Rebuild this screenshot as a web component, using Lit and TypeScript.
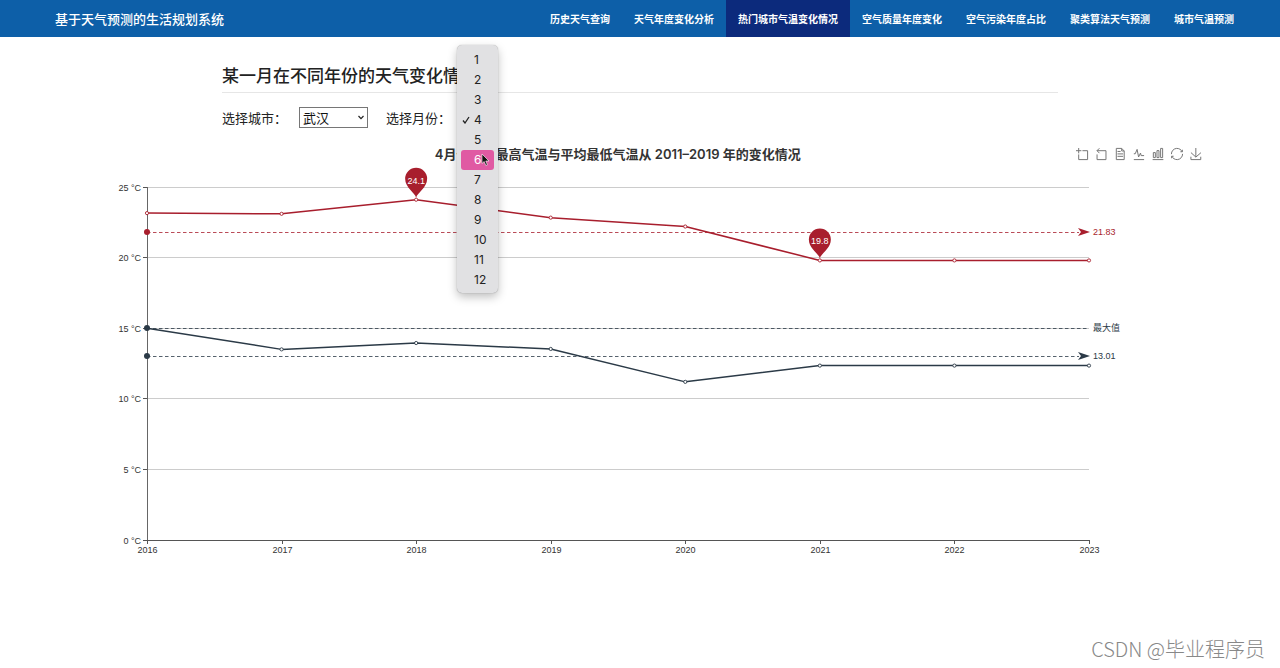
import { LitElement, css, html, svg } from "lit";
import { customElement, property, state } from "lit/decorators.js";
import { classMap } from "lit/directives/class-map.js";

const NAV = [
  "历史天气查询",
  "天气年度变化分析",
  "热门城市气温变化情况",
  "空气质量年度变化",
  "空气污染年度占比",
  "聚类算法天气预测",
  "城市气温预测",
];
const ACTIVE_NAV = 2;

const TOOLS = [
  { name: "区域缩放", d: "M0,13.5h26.9 M13.5,26.9V0 M32.1,13.5H58V58H13.5 V32.1" },
  { name: "区域缩放还原", d: "M22,1.4L9.9,13.5l12.3,12.3 M10.3,13.5H54.9v44.6 H10.3v-26" },
  { name: "数据视图", d: "M17.5,17.3H33 M45.4,29.5h-28 M11.5,2v56H51V14.8L38.4,2H11.5z M38.4,2.2v12.7H51 M45.4,41.7h-28" },
  { name: "切换为折线图", d: "M4.1,28.9h7.1l9.3-22l7.4,38l9.7-19.7l3,12.8h14.9M4.1,58h51.4" },
  { name: "切换为柱状图", d: "M6.7,22.9h10V48h-10V22.9zM24.9,13h10v35h-10V13zM43.2,2h10v46h-10V2zM3.1,58h53.7" },
  { name: "还原", d: "M47,18.9h9.8V8.7 M56.3,20.1 C52.1,9,40.5,0.6,26.8,2.1C12.6,3.7,1.6,16.2,2.1,30.6 M13,41.1H3.1v10.2 M3.7,39.9c4.2,11.1,15.8,19.5,29.5,18 c14.2-1.6,25.2-14.1,24.7-28.5" },
  { name: "保存为图片", d: "M4.7,22.9L29.3,45.5L54.7,23.4M4.6,43.6L4.6,58L53.8,58L53.8,43.6M29.2,45.1L29.2,0" },
];

const YEARS = [2016, 2017, 2018, 2019, 2020, 2021, 2022, 2023];
const HIGH = [23.15, 23.1, 24.1, 22.83, 22.2, 19.8, 19.8, 19.8];
const LOW = [15, 13.5, 13.95, 13.53, 11.2, 12.35, 12.35, 12.35];
const RED = "#a81e2d";
const NAVY = "#2b3a47";

@customElement("temperature-chart")
export class TemperatureChart extends LitElement {
  @state() private width = 1178;
  private observer?: ResizeObserver;

  static styles = css`
    :host {
      display: block;
      font-family: Inter, "Noto Sans CJK SC", sans-serif;
    }
    .head {
      display: grid;
      grid-template-columns: 1fr auto 1fr;
      align-items: center;
      height: 20px;
      padding: 0 5px;
    }
    h3 {
      grid-column: 2;
      margin: 0;
      color: #333;
      font-size: 13px;
      font-weight: 600;
      line-height: 20px;
      white-space: nowrap;
    }
    .tools {
      display: flex;
      justify-content: flex-end;
      gap: 7px;
    }
    .tools button {
      width: 12px;
      height: 12px;
      padding: 0;
      border: 0;
      background: none;
      cursor: pointer;
    }
    .tools svg {
      display: block;
      fill: none;
      stroke: #777;
      overflow: visible;
    }
    .tools path {
      vector-effect: non-scaling-stroke;
    }
    .plot {
      display: block;
      width: 100%;
      height: 400px;
      font-family: "Liberation Sans", "Noto Sans CJK SC", sans-serif;
      font-size: 9px;
    }
    .tick {
      fill: #333;
    }
    .pin {
      fill: #fff;
    }
  `;

  firstUpdated() {
    const measure = () => {
      const w = Math.round(this.getBoundingClientRect().width);
      if (w > 0) this.width = w;
    };
    measure();
    this.observer = new ResizeObserver(measure);
    this.observer.observe(this);
  }

  disconnectedCallback() {
    this.observer?.disconnect();
    super.disconnectedCallback();
  }

  private get left() {
    return Math.round(this.width * 0.1);
  }
  private get right() {
    return Math.round(this.width * 0.9);
  }
  private x(i: number) {
    return this.left + ((this.right - this.left) * i) / (YEARS.length - 1);
  }
  private y(v: number) {
    return 376 - v * 14.12;
  }

  private series(values: number[], color: string) {
    const points = values.map((v, i) => `${this.x(i)},${this.y(v)}`).join(" ");
    return svg`
      <polyline points=${points} fill="none" stroke=${color} stroke-width="1.5" stroke-linejoin="round" />
      ${values.map((v, i) => svg`<circle cx=${this.x(i)} cy=${this.y(v)} r="1.6" fill="#fff" stroke=${color} stroke-width="0.9" />`)}
    `;
  }

  private markLine(v: number, color: string, label: string, arrow: boolean) {
    const y = Math.round(this.y(v));
    const r = this.right;
    return svg`
      <line x1=${this.left} x2=${arrow ? r - 10 : r} y1=${y + 0.5} y2=${y + 0.5} stroke=${color} stroke-width="0.8" stroke-dasharray="3.5 2.5" />
      <circle cx=${this.left} cy=${y} r="3" fill=${color} />
      ${arrow ? svg`<path d=${`M${r + 1},${y}l-12,-4l3,4l-3,4z`} fill=${color} />` : ""}
      <text x=${r + 4} y=${y + 3} fill=${color}>${label}</text>
    `;
  }

  private pin(i: number) {
    const x = this.x(i);
    const y = this.y(HIGH[i]);
    return svg`
      <path d=${`M${x},${y - 2}C${x - 1},${y - 7} ${x - 11},${y - 12} ${x - 11},${y - 21}A11,11 0 1 1 ${x + 11},${y - 21}C${x + 11},${y - 12} ${x + 1},${y - 7} ${x},${y - 2}z`} fill=${RED} />
      <text class="pin" x=${x} y=${y - 16} text-anchor="middle">${HIGH[i]}</text>
    `;
  }

  render() {
    const l = this.left;
    const r = this.right;
    return html`
      <div class="head">
        <h3>4月份平均最高气温与平均最低气温从 2011–2019 年的变化情况</h3>
        <div class="tools">
          ${TOOLS.map(
            (t) => html`<button type="button" aria-label=${t.name}>
              <svg width="12" height="12" viewBox="0 0 60 60"><path d=${t.d} /></svg>
            </button>`,
          )}
        </div>
      </div>
      <svg class="plot" role="img" aria-label="平均最高气温与平均最低气温">
        ${[0, 5, 10, 15, 20, 25].map((v) => {
          const y = Math.floor(this.y(v)) + 0.5;
          return svg`
            ${v ? svg`<line x1=${l} x2=${r} y1=${y} y2=${y} stroke="#ccc" />` : ""}
            <line x1=${l - 4} x2=${l} y1=${y} y2=${y} stroke="#555" />
            <text class="tick" x=${l - 6} y=${y + 3} text-anchor="end">${v} °C</text>
          `;
        })}
        <line x1=${l + 0.5} x2=${l + 0.5} y1="23" y2="377" stroke="#666" />
        <line x1=${l} x2=${r} y1="376.5" y2="376.5" stroke="#555" />
        ${YEARS.map((year, i) => {
          const x = Math.round(this.x(i)) + 0.5;
          return svg`
            <line x1=${x} x2=${x} y1="376" y2="380" stroke="#555" />
            <text class="tick" x=${x} y="389" text-anchor="middle">${year}</text>
          `;
        })}
        ${this.pin(2)} ${this.pin(5)}
        ${this.series(HIGH, RED)} ${this.series(LOW, NAVY)}
        ${this.markLine(21.83, RED, "21.83", true)}
        ${this.markLine(15, NAVY, "最大值", false)}
        ${this.markLine(13.01, NAVY, "13.01", true)}
      </svg>
    `;
  }
}

@customElement("month-menu")
export class MonthMenu extends LitElement {
  @property({ type: Number }) selected = 4;
  @property({ type: Number }) hovered = 6;

  static styles = css`
    :host {
      display: block;
    }
    ul {
      margin: 0;
      padding: 5px 4px 3px;
      list-style: none;
      border-radius: 5px;
      background: #e1e1e3;
      box-shadow: 0 0 1px rgba(0, 0, 0, 0.4), 0 4px 10px rgba(0, 0, 0, 0.25);
      color: #222;
      font: 12px/20px Inter, sans-serif;
    }
    li {
      position: relative;
      display: grid;
      grid-template-columns: 8px 1fr;
      column-gap: 4px;
      align-items: center;
      height: 20px;
      padding-left: 1px;
      border-radius: 3px;
    }
    .value {
      grid-column: 2;
    }
    .check {
      grid-column: 1;
      grid-row: 1;
    }
    .hovered {
      background: #e05aa3;
      color: #fff;
    }
    .pointer {
      position: absolute;
      left: 20px;
      top: 3px;
    }
  `;

  render() {
    return html`<ul role="listbox" aria-label="月份">
      ${Array.from({ length: 12 }, (_, i) => i + 1).map(
        (m) => html`<li role="option" aria-selected=${m === this.selected} class=${classMap({ hovered: m === this.hovered })}>
          ${m === this.selected
            ? html`<svg class="check" width="8" height="8" viewBox="0 0 8 8"><path d="M1 4.5L3 7L7 1" fill="none" stroke="#222" stroke-width="1.3" /></svg>`
            : ""}
          <span class="value">${m}</span>
          ${m === this.hovered
            ? html`<svg class="pointer" width="9" height="14" viewBox="0 0 9 14"><path d="M1 1V10.5L3.2 8.5L4.8 12.5L6.4 11.8L4.8 8H8z" fill="#111" stroke="#fff" stroke-width="0.6" /></svg>`
            : ""}
        </li>`,
      )}
    </ul>`;
  }
}

@customElement("app-root")
export class AppRoot extends LitElement {
  static styles = css`
    :host {
      display: flex;
      flex-direction: column;
      min-height: 100vh;
      background: #fff;
      color: #222;
      font-family: Inter, "Noto Sans CJK SC", sans-serif;
    }
    header {
      display: flex;
      justify-content: space-between;
      align-items: stretch;
      height: 37px;
      padding: 0 34px 0 55px;
      background: #0d5fa8;
    }
    a {
      display: flex;
      align-items: center;
      color: #fff;
      text-decoration: none;
      white-space: nowrap;
    }
    .brand {
      font-size: 13px;
      font-weight: 500;
    }
    nav {
      display: flex;
    }
    nav a {
      padding: 0 12px;
      font-size: 10px;
      font-weight: 700;
    }
    nav .active {
      background: #0c2a7c;
    }
    .filters {
      width: 836px;
      max-width: 100%;
      margin: 0 auto;
      padding-top: 26px;
    }
    h2 {
      margin: 0;
      padding-bottom: 3px;
      border-bottom: 1px solid #e6e6e6;
      font-size: 17px;
      font-weight: 500;
      line-height: 26px;
    }
    form {
      display: flex;
      gap: 18px;
      margin-top: 14px;
      font-size: 13px;
    }
    .field {
      display: flex;
      align-items: center;
      gap: 12px;
      height: 21px;
    }
    .picker {
      position: relative;
      display: grid;
      align-items: center;
    }
    select {
      grid-area: 1 / 1;
      height: 21px;
      margin: 0;
      padding: 0 16px 0 3px;
      appearance: none;
      border: 1px solid #767676;
      border-radius: 0;
      background: #fff;
      color: #111;
      font: inherit;
    }
    .city {
      width: 69px;
    }
    .month {
      width: 34px;
    }
    .chevron {
      grid-area: 1 / 1;
      justify-self: end;
      margin-right: 4px;
      pointer-events: none;
    }
    month-menu {
      position: absolute;
      z-index: 2;
      left: -6px;
      top: -62px;
      width: 41px;
    }
    temperature-chart {
      width: 92%;
      margin: 16px 0 0 29px;
    }
    footer {
      margin-top: auto;
      padding: 0 15px 4px;
      color: #888;
      font: 300 20px/30px "Noto Sans CJK SC", sans-serif;
      text-align: right;
    }
  `;

  private chevron() {
    return html`<svg class="chevron" width="6" height="5" viewBox="0 0 6 5"><path d="M0.5 1L3 3.6L5.5 1" fill="none" stroke="#222" stroke-width="1.2" /></svg>`;
  }

  render() {
    return html`
      <header>
        <a class="brand" href="#">基于天气预测的生活规划系统</a>
        <nav>${NAV.map((t, i) => html`<a href="#" class=${classMap({ active: i === ACTIVE_NAV })}>${t}</a>`)}</nav>
      </header>
      <section class="filters">
        <h2>某一月在不同年份的天气变化情况</h2>
        <form>
          <div class="field">
            <label for="city">选择城市：</label>
            <div class="picker">
              <select id="city" class="city"><option>武汉</option></select>
              ${this.chevron()}
            </div>
          </div>
          <div class="field">
            <label for="month">选择月份：</label>
            <div class="picker">
              <select id="month" class="month">
                ${Array.from({ length: 12 }, (_, i) => html`<option ?selected=${i === 3}>${i + 1}</option>`)}
              </select>
              ${this.chevron()}
              <month-menu .selected=${4} .hovered=${6}></month-menu>
            </div>
          </div>
        </form>
      </section>
      <temperature-chart></temperature-chart>
      <footer>CSDN @毕业程序员</footer>
    `;
  }
}
